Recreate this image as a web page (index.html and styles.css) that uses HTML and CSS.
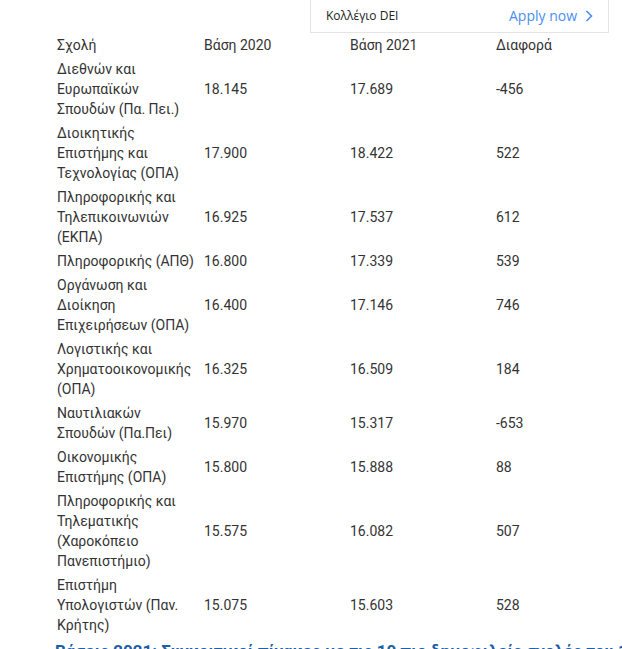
FILE: index.html
```html
<!DOCTYPE html>
<html lang="el">
<head>
<meta charset="utf-8">
<link rel="stylesheet" href="styles.css">
</head>
<body>
<div class="page">
  <table class="bases">
    <colgroup>
      <col class="c1"><col class="c2"><col class="c3"><col class="c4">
    </colgroup>
    <tr><td>Σχολή</td><td>Βάση 2020</td><td>Βάση 2021</td><td>Διαφορά</td></tr>
    <tr><td>Διεθνών και Ευρωπαϊκών Σπουδών (Πα. Πει.)</td><td>18.145</td><td>17.689</td><td>-456</td></tr>
    <tr><td>Διοικητικής Επιστήμης και Τεχνολογίας (ΟΠΑ)</td><td>17.900</td><td>18.422</td><td>522</td></tr>
    <tr><td>Πληροφορικής και Τηλεπικοινωνιών (ΕΚΠΑ)</td><td>16.925</td><td>17.537</td><td>612</td></tr>
    <tr><td>Πληροφορικής (ΑΠΘ)</td><td>16.800</td><td>17.339</td><td>539</td></tr>
    <tr><td>Οργάνωση και Διοίκηση Επιχειρήσεων (ΟΠΑ)</td><td>16.400</td><td>17.146</td><td>746</td></tr>
    <tr><td>Λογιστικής και Χρηματοοικονομικής (ΟΠΑ)</td><td>16.325</td><td>16.509</td><td>184</td></tr>
    <tr><td>Ναυτιλιακών Σπουδών (Πα.Πει)</td><td>15.970</td><td>15.317</td><td>-653</td></tr>
    <tr><td>Οικονομικής Επιστήμης (ΟΠΑ)</td><td>15.800</td><td>15.888</td><td>88</td></tr>
    <tr><td>Πληροφορικής και Τηλεματικής (Χαροκόπειο Πανεπιστήμιο)</td><td>15.575</td><td>16.082</td><td>507</td></tr>
    <tr><td>Επιστήμη Υπολογιστών (Παν. Κρήτης)</td><td>15.075</td><td>15.603</td><td>528</td></tr>
  </table>
  <h3 class="next-title">Βάσεις 2021: Συγκριτικοί πίνακες με τις 10 πιο δημοφιλείς σχολές του 1ου επιστημονικού πεδίου</h3>
</div>
<div class="ad">
  <span class="ad-name">Κολλέγιο DEI</span>
  <span class="ad-cta">Apply now
    <svg class="chev" width="8" height="12" viewBox="0 0 8 12"><path d="M1.5 1 L6.5 6 L1.5 11" fill="none" stroke="#4a8ef0" stroke-width="1.6"/></svg>
  </span>
</div>
</body>
</html>
```
FILE: styles.css
```css
html, body {
  margin: 0;
  padding: 0;
  background: #fff;
  overflow: hidden;
}
body {
  width: 622px;
  height: 649px;
  position: relative;
  font-family: Roboto, "Noto Sans", sans-serif;
  color: #333;
}
.page {
  padding: 33px 0 0 50px;
}
.bases {
  border-collapse: collapse;
  table-layout: fixed;
  width: 572px;
  font-size: 14px;
  line-height: 20px;
}
.c1 { width: 147px; }
.c2 { width: 146px; }
.c3 { width: 146px; }
.c4 { width: 133px; }
.bases td {
  padding: 2px 1px 2px 7px;
  vertical-align: middle;
  text-align: left;
}
.next-title {
  margin: 3px 0 0 5px;
  font-size: 17px;
  line-height: 22px;
  font-weight: 700;
  color: #1d5fa6;
  white-space: nowrap;
}
.ad {
  position: absolute;
  left: 310px;
  top: -1px;
  width: 299px;
  height: 34px;
  border: 1px solid #e4e4e4;
  background: #fff;
  display: flex;
  align-items: center;
  justify-content: space-between;
  padding: 0 15px 1px 15px;
  box-sizing: border-box;
  font-family: "Open Sans", "Noto Sans", sans-serif;
}
.ad-name {
  font-size: 12px;
  color: #222;
}
.ad-cta {
  display: flex;
  align-items: center;
  gap: 8px;
  font-size: 14px;
  color: #4a8ef0;
}
.chev { display: block; }
```
